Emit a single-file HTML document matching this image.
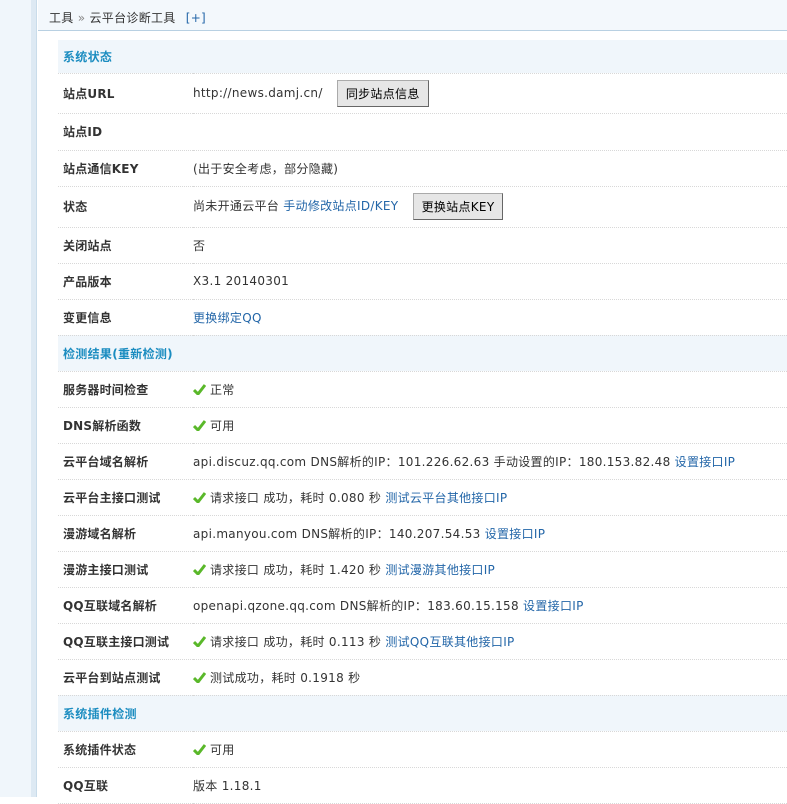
<!DOCTYPE html>
<html><head><meta charset="utf-8"><style>
*{margin:0;padding:0;box-sizing:border-box}
body{width:787px;height:797px;overflow:hidden;background:#fff;font:12px "DejaVu Sans","Liberation Sans","Noto Sans CJK SC",sans-serif;color:#333;position:relative}
.side{position:absolute;left:0;top:0;width:31px;height:797px;background:#f0f6fb}
.side2{position:absolute;left:31px;top:0;width:6px;height:797px;background:#dde9f3;border-right:1px solid #c9dcea}
.bc{position:absolute;left:38px;top:0;right:0;height:31px;background:#f3f8fc;border-bottom:1px solid #b8d0e2;padding:9px 0 0 11px;color:#333;letter-spacing:.3px}
.bc a{color:#2366a8;margin-left:6px}
.bc .r{color:#888}
table{position:absolute;left:58px;top:40px;width:729px;border-collapse:collapse}
td{border-bottom:1px dotted #d8d8d8;vertical-align:middle;padding:0;letter-spacing:.3px}
td.l{width:135px;padding-left:5px;font-weight:bold;color:#333;letter-spacing:.2px}
tr.h td{background:#f0f6fb;color:#1a8cc0;font-weight:bold;padding-left:5px}
a{color:#2366a8;text-decoration:none}
.btn{display:inline-block;background:#e6e6e6;border:1px solid #888;border-color:#aaa #666 #666 #aaa;padding:4px 8px;margin-left:10px;color:#000;vertical-align:middle}
.ck{display:inline-block;width:13px;height:11px;vertical-align:-1px;margin-right:4px}
</style></head><body>
<div class="side"></div><div class="side2"></div>
<div class="bc">工具 <span class="r">»</span> 云平台诊断工具 <a>[+]</a></div>
<table>
<tr class="h" style="height:33px"><td colspan="2">系统状态</td></tr>
<tr style="height:40px"><td class="l">站点URL</td><td>http://news.damj.cn/ <span class="btn">同步站点信息</span></td></tr>
<tr style="height:37px"><td class="l">站点ID</td><td></td></tr>
<tr style="height:36px"><td class="l">站点通信KEY</td><td>(出于安全考虑，部分隐藏)</td></tr>
<tr style="height:41px"><td class="l">状态</td><td>尚未开通云平台 <a>手动修改站点ID/KEY</a> <span class="btn">更换站点KEY</span></td></tr>
<tr style="height:36px"><td class="l">关闭站点</td><td>否</td></tr>
<tr style="height:36px"><td class="l">产品版本</td><td>X3.1 20140301</td></tr>
<tr style="height:36px"><td class="l">变更信息</td><td><a>更换绑定QQ</a></td></tr>
<tr class="h" style="height:36px"><td colspan="2">检测结果(重新检测)</td></tr>
<tr style="height:36px"><td class="l">服务器时间检查</td><td><svg class="ck" viewBox="0 0 13 11"><path d="M1 6l4 4 7-9" fill="none" stroke="#5ab82a" stroke-width="3"/></svg>正常</td></tr>
<tr style="height:36px"><td class="l">DNS解析函数</td><td><svg class="ck" viewBox="0 0 13 11"><path d="M1 6l4 4 7-9" fill="none" stroke="#5ab82a" stroke-width="3"/></svg>可用</td></tr>
<tr style="height:36px"><td class="l">云平台域名解析</td><td>api.discuz.qq.com DNS解析的IP：101.226.62.63 手动设置的IP：180.153.82.48 <a>设置接口IP</a></td></tr>
<tr style="height:36px"><td class="l">云平台主接口测试</td><td><svg class="ck" viewBox="0 0 13 11"><path d="M1 6l4 4 7-9" fill="none" stroke="#5ab82a" stroke-width="3"/></svg>请求接口 成功，耗时 0.080 秒 <a>测试云平台其他接口IP</a></td></tr>
<tr style="height:36px"><td class="l">漫游域名解析</td><td>api.manyou.com DNS解析的IP：140.207.54.53 <a>设置接口IP</a></td></tr>
<tr style="height:36px"><td class="l">漫游主接口测试</td><td><svg class="ck" viewBox="0 0 13 11"><path d="M1 6l4 4 7-9" fill="none" stroke="#5ab82a" stroke-width="3"/></svg>请求接口 成功，耗时 1.420 秒 <a>测试漫游其他接口IP</a></td></tr>
<tr style="height:36px"><td class="l">QQ互联域名解析</td><td>openapi.qzone.qq.com DNS解析的IP：183.60.15.158 <a>设置接口IP</a></td></tr>
<tr style="height:36px"><td class="l">QQ互联主接口测试</td><td><svg class="ck" viewBox="0 0 13 11"><path d="M1 6l4 4 7-9" fill="none" stroke="#5ab82a" stroke-width="3"/></svg>请求接口 成功，耗时 0.113 秒 <a>测试QQ互联其他接口IP</a></td></tr>
<tr style="height:36px"><td class="l">云平台到站点测试</td><td><svg class="ck" viewBox="0 0 13 11"><path d="M1 6l4 4 7-9" fill="none" stroke="#5ab82a" stroke-width="3"/></svg>测试成功，耗时 0.1918 秒</td></tr>
<tr class="h" style="height:36px"><td colspan="2">系统插件检测</td></tr>
<tr style="height:36px"><td class="l">系统插件状态</td><td><svg class="ck" viewBox="0 0 13 11"><path d="M1 6l4 4 7-9" fill="none" stroke="#5ab82a" stroke-width="3"/></svg>可用</td></tr>
<tr style="height:36px"><td class="l">QQ互联</td><td>版本 1.18.1</td></tr>
</table>
</body></html>
